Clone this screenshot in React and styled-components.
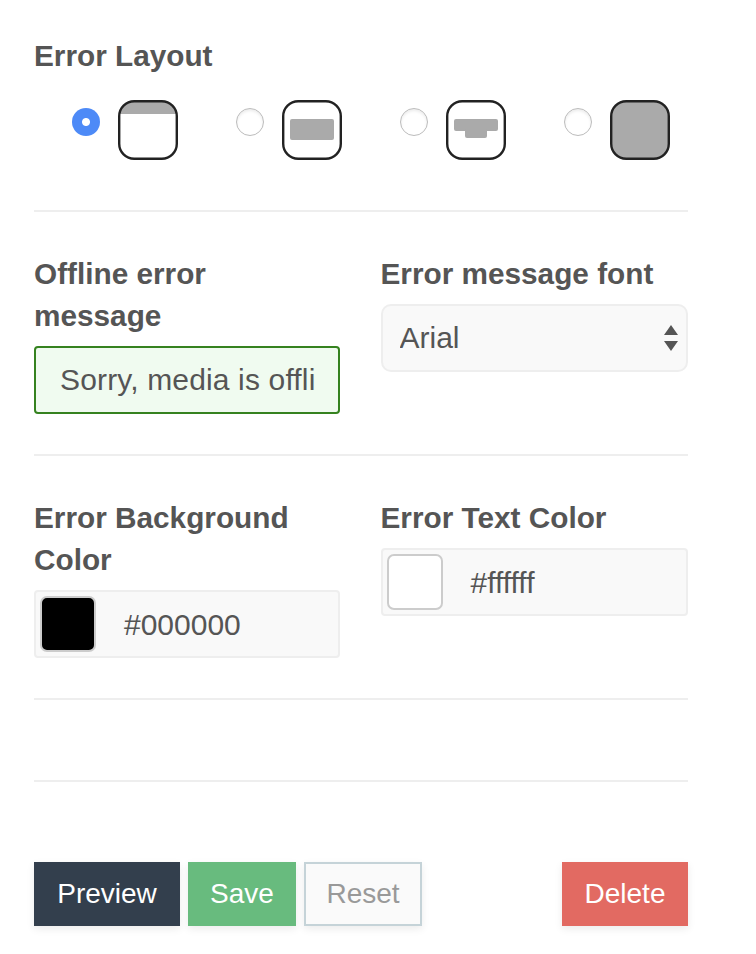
import React from "react";
import styled, { createGlobalStyle } from "styled-components";

const GlobalStyle = createGlobalStyle`
  html, body {
    margin: 0;
    padding: 0;
    background: #fff;
  }
  body {
    font-family: "Liberation Sans", Arial, sans-serif;
    color: #555;
  }
`;

const Page = styled.div`
  box-sizing: border-box;
  width: 756px;
  height: 954px;
  padding: 35px 68px 0 34px;
  overflow: hidden;
`;

const Label = styled.label`
  display: block;
  font-size: 29.75px;
  line-height: 42px;
  font-weight: 700;
  color: #555;
`;

const LayoutOptions = styled.div`
  display: flex;
  gap: 58px;
  margin-top: 23px;
  padding-left: 38px;
`;

const LayoutOption = styled.div`
  display: flex;
  align-items: flex-start;
  flex: none;
  gap: 18px;
`;

const Radio = styled.input.attrs({ type: "radio" })`
  appearance: none;
  flex: none;
  box-sizing: border-box;
  width: 28px;
  height: 28px;
  margin: 8px 0 0;
  border-radius: 50%;
  border: 1.5px solid #bcbcbc;
  background: #fff;
  box-shadow: inset 0 2px 3px rgba(0, 0, 0, 0.08);

  &:checked {
    border: none;
    box-shadow: none;
    background: radial-gradient(circle, #fff 0 3.5px, #4d8af7 4.5px);
  }
`;

const IconSvg = styled.svg`
  display: block;
  flex: none;
`;

const Divider = styled.hr`
  height: 2px;
  margin: ${(p) => p.$top}px 0 0;
  border: none;
  background: #eee;
`;

const Columns = styled.div`
  display: grid;
  grid-template-columns: 306px 307.5px;
  column-gap: 40.5px;
  align-items: start;
  margin-top: 41px;
`;

const Field = styled.div`
  display: flex;
  flex-direction: column;
  gap: 9px;
`;

const TextInput = styled.input`
  box-sizing: border-box;
  width: 100%;
  height: 68px;
  padding: 0 22px 0 24px;
  border: 2px solid #35821f;
  border-radius: 4px;
  background: #f0fbf0;
  font-family: inherit;
  font-size: 30px;
  letter-spacing: 0.15px;
  color: #555;
  outline: none;
`;

const SelectWrap = styled.div`
  position: relative;
`;

const Select = styled.select`
  display: block;
  box-sizing: border-box;
  width: 100%;
  height: 68px;
  padding: 0 17px 2px;
  appearance: none;
  border: 2px solid #eee;
  border-radius: 10px;
  background: #f9f9f9;
  font-family: inherit;
  font-size: 30px;
  color: #555;
  outline: none;
`;

const SelectArrows = styled.svg`
  position: absolute;
  top: 21px;
  right: 10px;
  pointer-events: none;
`;

const ColorField = styled.div`
  box-sizing: border-box;
  display: flex;
  align-items: center;
  height: 68px;
  padding: 0 4px;
  border: 2px solid #eee;
  border-radius: 4px;
  background: #f9f9f9;
`;

const Swatch = styled.span`
  flex: none;
  box-sizing: border-box;
  width: 56px;
  height: 56px;
  border: 2px solid #ccc;
  border-radius: 7px;
  background: ${(p) => p.$color};
`;

const ColorValue = styled.span`
  margin-left: 28px;
  padding-top: 2px;
  font-size: 30px;
  color: #555;
`;

const Actions = styled.div`
  display: flex;
  gap: 8px;
  margin-top: 80px;
`;

const Button = styled.button`
  box-sizing: border-box;
  height: 64px;
  width: ${(p) => p.$width}px;
  margin-left: ${(p) => (p.$push ? "auto" : "0")};
  padding: 0;
  border: ${(p) => (p.$outline ? "2px solid #c5d3d8" : "none")};
  background: ${(p) => p.$bg};
  color: ${(p) => p.$fg || "#fff"};
  font-family: inherit;
  font-size: 28px;
  box-shadow: 0 3px 8px rgba(0, 0, 0, 0.08);
`;

function LayoutIcon({ kind }) {
  return (
    <IconSvg width="60" height="60" viewBox="0 0 60 60">
      <defs>
        <clipPath id="layout-clip">
          <rect x="1" y="1" width="58" height="58" rx="15" />
        </clipPath>
      </defs>
      {kind === "top" && (
        <rect x="0" y="0" width="60" height="14" fill="#aaa" clipPath="url(#layout-clip)" />
      )}
      {kind === "center" && <rect x="8" y="19" width="44" height="21" rx="2" fill="#aaa" />}
      {kind === "tab" && (
        <>
          <rect x="8" y="19" width="44" height="12" rx="2" fill="#aaa" />
          <rect x="19" y="29" width="22" height="9" rx="2" fill="#aaa" />
        </>
      )}
      <rect
        x="1.2"
        y="1.2"
        width="57.6"
        height="57.6"
        rx="15"
        fill={kind === "full" ? "#aaa" : "none"}
        stroke="#222"
        strokeWidth="2.4"
      />
    </IconSvg>
  );
}

const layouts = ["top", "center", "tab", "full"];

export default function App() {
  return (
    <Page>
      <GlobalStyle />
      <Label>Error Layout</Label>
      <LayoutOptions>
        {layouts.map((kind, i) => (
          <LayoutOption key={kind}>
            <Radio name="layout" defaultChecked={i === 0} />
            <LayoutIcon kind={kind} />
          </LayoutOption>
        ))}
      </LayoutOptions>
      <Divider $top={50} />

      <Columns>
        <Field>
          <Label>Offline error message</Label>
          <TextInput defaultValue="Sorry, media is offline" />
        </Field>
        <Field>
          <Label>Error message font</Label>
          <SelectWrap>
            <Select defaultValue="Arial">
              <option>Arial</option>
              <option>Helvetica</option>
            </Select>
            <SelectArrows width="14" height="26" viewBox="0 0 14 26">
              <path d="M7 0l7 10H0zM0 16h14l-7 10z" fill="#555" />
            </SelectArrows>
          </SelectWrap>
        </Field>
      </Columns>
      <Divider $top={40} />

      <Columns>
        <Field>
          <Label>Error Background Color</Label>
          <ColorField>
            <Swatch $color="#000" />
            <ColorValue>#000000</ColorValue>
          </ColorField>
        </Field>
        <Field>
          <Label>Error Text Color</Label>
          <ColorField>
            <Swatch $color="#fff" />
            <ColorValue>#ffffff</ColorValue>
          </ColorField>
        </Field>
      </Columns>
      <Divider $top={40} />
      <Divider $top={80} />

      <Actions>
        <Button $width={146} $bg="#333f4d">Preview</Button>
        <Button $width={108} $bg="#68bb7e">Save</Button>
        <Button $width={118} $bg="#fafafa" $fg="#999" $outline>Reset</Button>
        <Button $width={126} $bg="#e26a62" $push>Delete</Button>
      </Actions>
    </Page>
  );
}
